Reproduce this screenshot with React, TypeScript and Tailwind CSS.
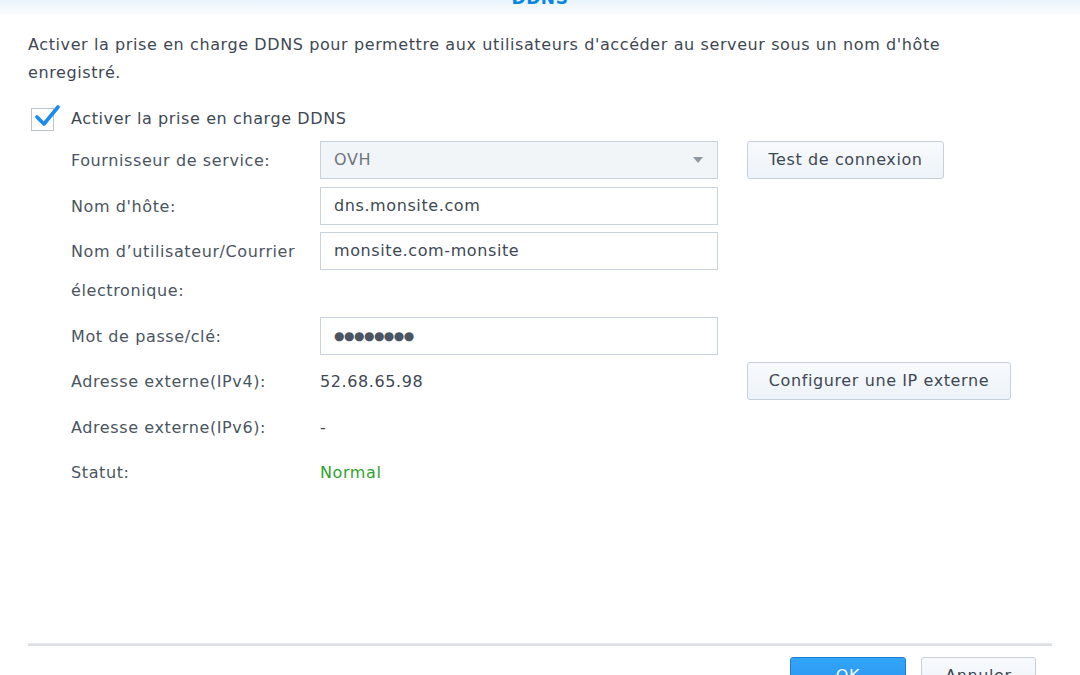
const labelCls = 'w-[249px] shrink-0 leading-[39px] text-[#4b5561]';

const Field = ({ value, muted, select }: { value: string; muted?: boolean; select?: boolean }) => (
  <div
    className={`w-[398px] h-[38px] shrink-0 border border-[#c8d2dc] flex items-center justify-between pl-[13px] pr-[14px] ${
      select ? 'bg-[#f2f5f8]' : 'bg-white'
    }`}
  >
    <span className={muted ? 'text-[#6c7682]' : 'text-[#3e4853]'}>{value}</span>
    {select && <span className="w-0 h-0 border-l-[5px] border-r-[5px] border-t-[6px] border-l-transparent border-r-transparent border-t-[#8f99a3]" />}
  </div>
);

const GhostButton = ({ children, className = '' }: { children: React.ReactNode; className?: string }) => (
  <button
    className={`h-[38px] rounded-[3px] border border-[#c5d0da] bg-gradient-to-b from-[#f8fafd] to-[#edf3f9] text-[#3e4853] tracking-[0.6px] ${className}`}
  >
    {children}
  </button>
);

export default function App() {
  return (
    <div className="w-[1080px] h-[675px] bg-white overflow-hidden flex flex-col text-[16px] tracking-[0.6px] font-['DejaVu_Sans',sans-serif]">
      {/* titre */}
      <div className="h-[15px] shrink-0 overflow-hidden bg-gradient-to-b from-[#eaf3fc] to-[#fbfdff] text-center">
        <div className="-mt-[10px] text-[17px] leading-none font-bold text-[#0a86e4]">DDNS</div>
      </div>

      <div className="flex-1 flex flex-col px-[28px] pt-[16px]">
        <p className="max-w-[960px] leading-[28px] text-[#3e4853]">
          Activer la prise en charge DDNS pour permettre aux utilisateurs d'accéder au serveur sous un nom d'hôte
          enregistré.
        </p>

        {/* case à cocher */}
        <div className="mt-[20px] h-[24px] flex items-center">
          <div className="relative w-[23px] h-[23px] ml-[3px] border border-[#bcc5ce] bg-white">
            <svg viewBox="0 0 26 24" className="absolute -top-[5px] left-[2px] w-[26px] h-[24px]">
              <path d="M3 13 L10 20 L24 3" fill="none" stroke="#1a8bef" strokeWidth="3.6" strokeLinecap="round" strokeLinejoin="round" />
            </svg>
          </div>
          <span className="ml-[17px] text-[#3e4853]">Activer la prise en charge DDNS</span>
        </div>

        {/* formulaire */}
        <div className="mt-[10px] ml-[43px] flex flex-col gap-[6.5px]">
          <div className="flex items-start">
            <div className={labelCls}>Fournisseur de service:</div>
            <Field value="OVH" muted select />
            <GhostButton className="ml-[29px] w-[197px]">Test de connexion</GhostButton>
          </div>
          <div className="flex items-start">
            <div className={labelCls}>Nom d'hôte:</div>
            <Field value="dns.monsite.com" />
          </div>
          <div className="flex items-start">
            <div className={labelCls}>
              Nom d’utilisateur/Courrier
              <br />
              électronique:
            </div>
            <Field value="monsite.com-monsite" />
          </div>
          <div className="flex items-start">
            <div className={labelCls}>Mot de passe/clé:</div>
            <div className="w-[398px] h-[38px] border border-[#c8d2dc] bg-white flex items-center pl-[13px] text-[#4b5561] tracking-[-0.5px] text-[12px]">
              ●●●●●●●●
            </div>
          </div>
          <div className="flex items-start">
            <div className={labelCls}>Adresse externe(IPv4):</div>
            <div className="w-[398px] leading-[39px] text-[#3e4853]">52.68.65.98</div>
            <GhostButton className="ml-[29px] w-[264px]">Configurer une IP externe</GhostButton>
          </div>
          <div className="flex items-start">
            <div className={labelCls}>Adresse externe(IPv6):</div>
            <div className="leading-[39px] text-[#3e4853]">-</div>
          </div>
          <div className="flex items-start">
            <div className={labelCls}>Statut:</div>
            <div className="leading-[39px] text-[#2ea32e]">Normal</div>
          </div>
        </div>

        {/* séparateur + boutons */}
        <div className="mt-auto h-[3px] bg-gradient-to-b from-[#e6e8ea] to-[#d9dcdf]" />
        <div className="h-[29px] flex justify-end items-start pt-[11px] pr-[16px] gap-[15px]">
          <button className="w-[116px] h-[38px] shrink-0 rounded-[3px] border border-[#1b7fd8] bg-gradient-to-b from-[#34a4f8] to-[#2394f0] text-white">
            OK
          </button>
          <GhostButton className="w-[115px] shrink-0">Annuler</GhostButton>
        </div>
      </div>
    </div>
  );
}
